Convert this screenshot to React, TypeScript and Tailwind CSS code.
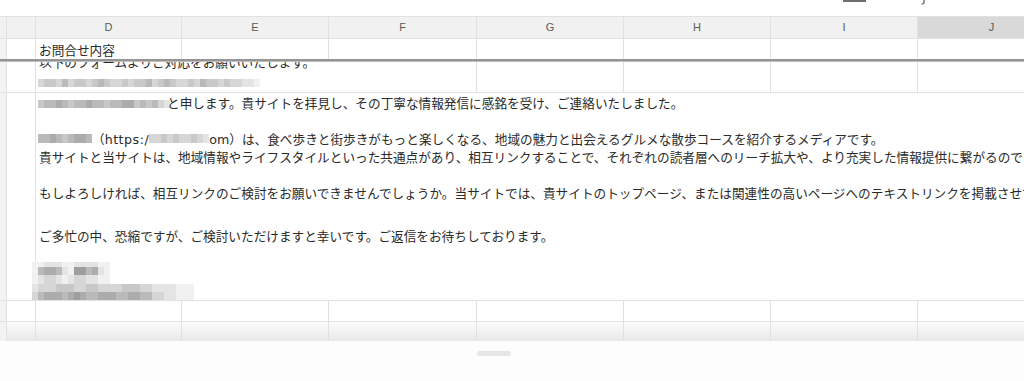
import React from "react";

const SH = [
  "bg-white",
  "bg-[#f1f1f1]",
  "bg-[#e4e4e4]",
  "bg-[#d6d6d6]",
  "bg-[#c8c8c8]",
  "bg-[#bababa]",
  "bg-[#acacac]",
  "bg-[#9e9e9e]",
  "bg-[#909090]",
];

function Mosaic({ p, h, className = "" }: { p: string; h: string; className?: string }) {
  return (
    <div className={`flex shrink-0 ${h} ${className}`}>
      {p.split("").map((d, i) => (
        <div key={i} className={`w-[6px] h-full ${SH[Number(d)]}`} />
      ))}
    </div>
  );
}

const B = "border-[#e1e1e1]";

function Cell({ w, children, className = "" }: { w: string; children?: React.ReactNode; className?: string }) {
  return <div className={`${w} shrink-0 h-full border-r ${B} ${className}`}>{children}</div>;
}

const COLS = ["w-[146px]", "w-[147px]", "w-[148px]", "w-[147px]", "w-[147px]", "w-[147px]", "w-[147px]"];

function PlainRow({ h, className = "", children }: { h: string; className?: string; children?: React.ReactNode }) {
  return (
    <div className={`flex shrink-0 ${h} ${className}`}>
      <Cell w="w-[7px]" className="bg-[#f3f3f3]" />
      <Cell w="w-[29px]" />
      {COLS.map((w, i) => (
        <Cell key={i} w={w}>
          {i === 0 ? children : null}
        </Cell>
      ))}
    </div>
  );
}

function Line({ children, className = "" }: { children: React.ReactNode; className?: string }) {
  return <div className={`flex items-center h-[18px] leading-[18px] whitespace-nowrap ${className}`}>{children}</div>;
}

export default function App() {
  return (
    <div className="w-[1024px] h-[381px] overflow-hidden bg-white flex flex-col text-[12.65px] text-[#2a2a2a] font-['Liberation_Sans','Noto_Sans_CJK_JP',sans-serif]">
      {/* top strip with cut-off toolbar bits */}
      <div className="h-[16px] shrink-0 flex items-start">
        <div className="ml-[843px] w-[23px] h-[2px] bg-[#6e6e6e]" />
        <svg className="ml-[54px]" width="6" height="5" viewBox="0 0 6 5">
          <path d="M4 0 V2.5 Q4 4 2.5 4 H1.5" fill="none" stroke="#555" strokeWidth="1.2" />
        </svg>
      </div>

      {/* column header */}
      <div className={`flex shrink-0 h-[23px] border-t border-b ${B} bg-[#f1f1f1] text-[11px] text-[#5a5a5a]`}>
        <Cell w="w-[7px]" />
        <Cell w="w-[29px]" />
        {["D", "E", "F", "G", "H", "I"].map((l, i) => (
          <Cell key={l} w={COLS[i]} className="flex items-center justify-center">
            {l}
          </Cell>
        ))}
        <div className="w-[147px] shrink-0 h-full bg-[#d9d9d9] flex items-center justify-center">J</div>
      </div>

      {/* row 1 (frozen) */}
      <PlainRow h="h-[20px]">
        <div className="h-full pl-[3px] pt-[3px] whitespace-nowrap">
          <div className="leading-[18px]">お問合せ内容</div>
        </div>
      </PlainRow>

      {/* frozen divider */}
      <div className="relative z-20 shrink-0 flex flex-col">
        <div className="h-[2px] bg-[#949494]" />
        <div className="h-[1px] bg-[#bdbdbd]" />
      </div>

      {/* row 2 */}
      <div className={`flex shrink-0 h-[31px] border-b ${B}`}>
        <Cell w="w-[7px]" className="bg-[#f3f3f3]" />
        <Cell w="w-[29px]" />
        <Cell w="w-[441px]" className="overflow-hidden">
          <div className="pl-[3px] mt-[-8px]">
            <Line>以下のフォームよりご対応をお願いいたします。</Line>
            <Mosaic
              className="mt-[7px] ml-[-1px]"
              h="h-[8px]"
              p="3443534434543343445345433435443433221"
            />
          </div>
        </Cell>
        <Cell w="w-[147px]" />
        <Cell w="w-[147px]" />
        <Cell w="w-[147px]" />
        <Cell w="w-[147px]" />
      </div>

      {/* row 3: the message */}
      <div className={`flex shrink-0 h-[208px] border-b ${B}`}>
        <Cell w="w-[7px]" className="bg-[#f3f3f3]" />
        <Cell w="w-[29px]" />
        <div className="relative z-10 flex-1 min-w-0 pl-[3px] pt-[2px]">
          <Line>
            <Mosaic className="ml-[-1px] mr-[-3px]" h="h-[8px]" p="4556545565545566454532" />
            <span>と申します。貴サイトを拝見し、その丁寧な情報発信に感銘を受け、ご連絡いたしました。</span>
          </Line>
          <Line className="mt-[18px]">
            <Mosaic className="ml-[-1px] mt-[-4px]" h="h-[9px]" p="556545665" />
            <span>（</span>
            <span className="font-['DejaVu_Sans',sans-serif] tracking-[0.5px]">https:/</span>
            <Mosaic className="mt-[-4px]" h="h-[9px]" p="3343433432" />
            <span className="font-['DejaVu_Sans',sans-serif]">om</span>
            <span>）は、食べ歩きと街歩きがもっと楽しくなる、地域の魅力と出会えるグルメな散歩コースを紹介するメディアです。</span>
          </Line>
          <Line>
            貴サイトと当サイトは、地域情報やライフスタイルといった共通点があり、相互リンクすることで、それぞれの読者層へのリーチ拡大や、より充実した情報提供に繋がるのではないかと考えております。
          </Line>
          <Line className="mt-[18px]">
            もしよろしければ、相互リンクのご検討をお願いできませんでしょうか。当サイトでは、貴サイトのトップページ、または関連性の高いページへのテキストリンクを掲載させていただきたいと考えております。
          </Line>
          <Line className="mt-[25px]">ご多忙の中、恐縮ですが、ご検討いただけますと幸いです。ご返信をお待ちしております。</Line>
          <div className="mt-[16px] ml-[-7px] flex flex-col">
            <Mosaic h="h-[5px]" p="11222112222110" />
            <Mosaic h="h-[8px]" p="15665217756210" />
            <Mosaic h="h-[9px]" p="12332123322110" />
            <Mosaic h="h-[8px]" p="233344433443333444332222111" />
            <Mosaic h="h-[8px]" p="356665676556665566553322111" />
          </div>
        </div>
      </div>

      {/* row 4 */}
      <PlainRow h="h-[21px]" className={`border-b ${B}`} />

      {/* row 5 (fading) */}
      <PlainRow h="h-[19px]" className="bg-linear-to-b from-[#fbfbfb] to-[#e9e9e9]" />

      {/* bottom area with handle */}
      <div className="flex-1 bg-[#fdfdfd]">
        <div className="ml-[477px] mt-[10px] w-[34px] h-[5px] rounded-full bg-[#e6e6e6]" />
      </div>
    </div>
  );
}
